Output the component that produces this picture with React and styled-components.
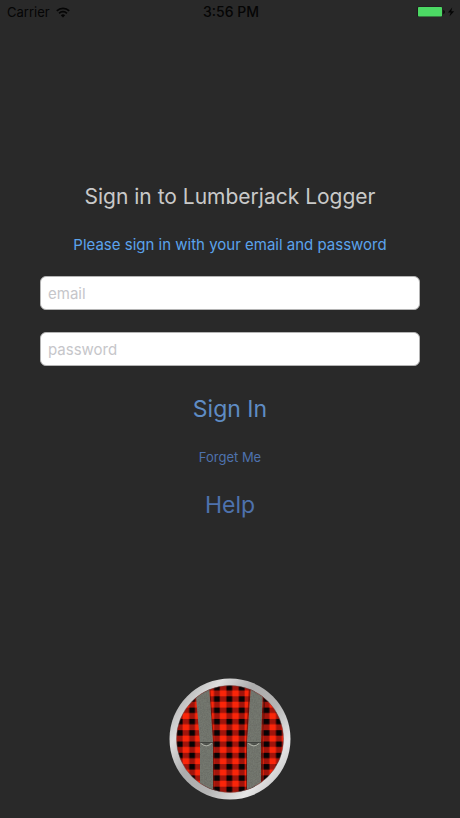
import React from "react";
import styled, { createGlobalStyle } from "styled-components";

const GlobalStyle = createGlobalStyle`
  * { box-sizing: border-box; }
  body {
    margin: 0;
    background: #292929;
    font-family: Inter, "Liberation Sans", sans-serif;
  }
`;

const Screen = styled.div`
  min-height: 100vh;
  display: flex;
  flex-direction: column;
  background: #292929;
`;

const StatusBar = styled.header`
  display: grid;
  grid-template-columns: 1fr auto 1fr;
  align-items: center;
  height: 24px;
  padding: 0 5px 0 7px;
  color: #050505;
  font-size: 13px;
  line-height: 16px;
`;

const StatusGroup = styled.div`
  display: flex;
  align-items: center;
  justify-content: ${(p) => (p.$end ? "flex-end" : "flex-start")};
  gap: 6px;
`;

const Clock = styled.time`
  font-size: 14px;
  font-weight: 500;
`;

const Form = styled.form`
  display: flex;
  flex-direction: column;
  align-items: center;
  padding: 157px 40px 0;
`;

const Title = styled.h1`
  margin: 0;
  color: #c9c9c9;
  font-size: 21px;
  font-weight: 400;
  line-height: 32px;
  white-space: nowrap;
`;

const Hint = styled.p`
  margin: 20px 0 19px;
  color: #5ba3ec;
  font-size: 15px;
  line-height: 24px;
  white-space: nowrap;
`;

const Field = styled.input`
  width: 100%;
  height: 34px;
  margin-bottom: 22px;
  padding: 0 7px;
  border: 1px solid #b4b4b4;
  border-radius: 6px;
  background: #fff;
  color: #222;
  font: 400 15px Inter, "Liberation Sans", sans-serif;

  &::placeholder {
    color: #c6c6ca;
    opacity: 1;
  }
`;

const TextButton = styled.button`
  padding: 0;
  border: 0;
  background: none;
  color: ${(p) => (p.$bright ? "#5f8cc4" : "#4e72ad")};
  font-family: inherit;
  font-size: ${(p) => (p.$small ? 13 : 23)}px;
  line-height: 32px;
  cursor: pointer;
`;

const Actions = styled.div`
  display: flex;
  flex-direction: column;
  align-items: center;
  gap: 16px;
  padding-top: 5px;
`;

const Footer = styled.footer`
  display: flex;
  justify-content: center;
  margin-top: auto;
  padding: 24px 0 18px;
`;

const Drawing = styled.svg`
  display: block;
  flex: none;
`;

function WifiIcon() {
  return (
    <Drawing width="14" height="11" viewBox="0 0 14 11" fill="none" stroke="#050505" strokeWidth="1.7" aria-label="Wi-Fi">
      <path d="M.8 3.9a8.8 8.8 0 0 1 12.4 0M3.1 6.3a5.5 5.5 0 0 1 7.8 0" />
      <path d="M7 10.6 4.8 8.3a3.1 3.1 0 0 1 4.4 0Z" fill="#050505" stroke="none" />
    </Drawing>
  );
}

function BatteryIcon() {
  return (
    <Drawing width="38" height="12" viewBox="0 0 38 12" aria-label="Battery charging">
      <rect x=".2" y=".5" width="25" height="10.6" rx="1.6" fill="#1c1c1c" />
      <rect x="1" y="1" width="24" height="9.6" rx=".8" fill="#4cd964" />
      <path d="M26.3 4c2 .5 2 3.5 0 4Z" fill="#050505" />
      <path d="M35.2 1.6 31 6.6h2.7l-1.3 4 4.8-5.4h-2.9Z" fill="#050505" />
    </Drawing>
  );
}

function LumberjackBadge() {
  return (
    <Drawing width="122" height="122" viewBox="0 0 122 122" role="img" aria-label="Lumberjack Logger">
      <defs>
        <linearGradient id="rim" x1="0" y1=".1" x2="1" y2=".9">
          <stop offset="0" stopColor="#c5c5c5" />
          <stop offset=".1" stopColor="#bdbdbd" />
          <stop offset=".22" stopColor="#dedede" />
          <stop offset=".4" stopColor="#acacac" />
          <stop offset=".6" stopColor="#b5b5b5" />
          <stop offset=".8" stopColor="#e6e6e6" />
          <stop offset="1" stopColor="#b8b8b8" />
        </linearGradient>
        <pattern id="plaid" x="54" y="63.5" width="12.4" height="11.3" patternUnits="userSpaceOnUse">
          <rect width="12.4" height="11.3" fill="#fa2509" />
          <rect x="3.4" width="5.8" height="11.3" fill="#a0140b" />
          <rect width="12.4" height="5.4" fill="#a0140b" />
          <rect x="3.4" width="5.8" height="5.4" fill="#080304" />
        </pattern>
        <filter id="grain" x="0" y="0" width="100%" height="100%">
          <feTurbulence type="fractalNoise" baseFrequency=".7" numOctaves="2" seed="4" />
          <feColorMatrix values="0 0 0 0 .1  0 0 0 0 .1  0 0 0 0 .09  .9 0 0 0 -.3" />
          <feComposite in2="SourceGraphic" operator="in" result="specks" />
          <feMerge>
            <feMergeNode in="SourceGraphic" />
            <feMergeNode in="specks" />
          </feMerge>
        </filter>
        <clipPath id="face"><circle cx="61" cy="61" r="53.5" /></clipPath>
      </defs>
      <circle cx="61" cy="61" r="60.5" fill="url(#rim)" />
      <g clipPath="url(#face)">
        <rect width="122" height="122" fill="url(#plaid)" />
        <path d="M40 7h1l4 58v50h-1V65ZM80 7h2l-4 58v50h-1V65ZM94 7h3l-3 58v50h-2V65Z" fill="#290808" opacity=".5" />
        <g fill="#757870" filter="url(#grain)">
          <path d="M26 7h14l4 57v51H31V65Z" />
          <path d="M82 7h12l-2 57v51H78V64Z" />
        </g>
        <g fill="none" strokeLinecap="round">
          <path d="M31 64.5h12.500M78.500 64.500h13" stroke="#41443f" strokeWidth="1" />
          <path d="M33.500 65.500q4 2.500 7.500 0ZM81.500 65.500q4 2.500 7.500 0Z" fill="#393c38" />
          <path d="M32 65.500q5.500 5 10.500 0M79.500 65.500q5.500 5 10.500 0" stroke="#aeb1a6" strokeWidth="1" />
        </g>
      </g>
      <circle cx="61" cy="61" r="53.5" fill="none" stroke="#6a4542" strokeWidth=".5" />
    </Drawing>
  );
}

export default function App() {
  return (
    <Screen>
      <GlobalStyle />
      <StatusBar>
        <StatusGroup>
          <span>Carrier</span>
          <WifiIcon />
        </StatusGroup>
        <Clock>3:56 PM</Clock>
        <StatusGroup $end>
          <BatteryIcon />
        </StatusGroup>
      </StatusBar>
      <Form onSubmit={(e) => e.preventDefault()}>
        <Title>Sign in to Lumberjack Logger</Title>
        <Hint>Please sign in with your email and password</Hint>
        <Field type="email" placeholder="email" aria-label="email" />
        <Field type="password" placeholder="password" aria-label="password" />
        <Actions>
          <TextButton type="submit" $bright>Sign In</TextButton>
          <TextButton type="button" $small>Forget Me</TextButton>
          <TextButton type="button">Help</TextButton>
        </Actions>
      </Form>
      <Footer>
        <LumberjackBadge />
      </Footer>
    </Screen>
  );
}
